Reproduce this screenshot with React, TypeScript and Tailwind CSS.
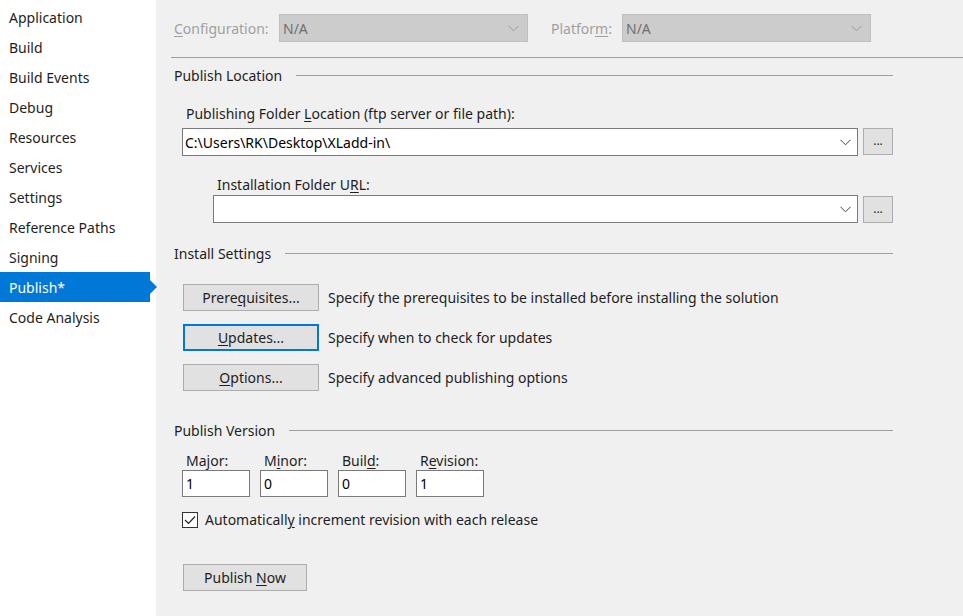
import React from 'react';

const font = { fontFamily: '"Noto Sans", "Open Sans", sans-serif' };

const navItems = [
  'Application',
  'Build',
  'Build Events',
  'Debug',
  'Resources',
  'Services',
  'Settings',
  'Reference Paths',
  'Signing',
  'Publish*',
  'Code Analysis',
];

const U: React.FC<{ children: React.ReactNode }> = ({ children }) => (
  <span className="underline underline-offset-2">{children}</span>
);

const Chevron: React.FC<{ color?: string }> = ({ color = '#444' }) => (
  <svg width="11" height="7" viewBox="0 0 11 7" fill="none">
    <path d="M0.5 0.8 L5.5 5.8 L10.5 0.8" stroke={color} strokeWidth="1" />
  </svg>
);

const SectionHeader: React.FC<{ title: string }> = ({ title }) => (
  <div className="flex items-center h-[20px] w-[719px] gap-[14px]">
    <span className="whitespace-nowrap text-[#1e1e1e]">{title}</span>
    <div className="flex-1 h-px bg-[#a0a0a0]" />
  </div>
);

const WinButton: React.FC<{ children: React.ReactNode; focused?: boolean; className?: string }> = ({
  children,
  focused,
  className,
}) => (
  <button
    className={`h-[27px] bg-[#e1e1e1] text-[#1e1e1e] flex items-center justify-center ${
      focused ? 'border-2 border-[#0078d7]' : 'border border-[#adadad]'
    } ${className ?? ''}`}
  >
    {children}
  </button>
);

const Combo: React.FC<{ value?: string; className?: string }> = ({ value, className }) => (
  <div
    className={`h-[28px] bg-white border border-[#7a7a7a] flex items-center justify-between pl-[2px] pr-[6px] ${className ?? ''}`}
  >
    <span className="text-black">{value}</span>
    <Chevron />
  </div>
);

const VersionField: React.FC<{ label: React.ReactNode; value: string }> = ({ label, value }) => (
  <div className="flex flex-col w-[68px]">
    <span className="pl-[4px] h-[18px] leading-[18px] text-[#1e1e1e]">{label}</span>
    <div className="mt-0 h-[27px] bg-white border border-[#7a7a7a] flex items-center pl-[3px] text-black">
      {value}
    </div>
  </div>
);

export default function App() {
  return (
    <div className="w-[963px] h-[616px] flex bg-[#f0f0f0] text-[14px] overflow-hidden" style={font}>
      {/* left nav */}
      <div className="w-[156px] bg-white pt-[2px] flex flex-col">
        {navItems.map((item) => {
          const active = item === 'Publish*';
          return (
            <div key={item} className="relative h-[30px] flex items-center pl-[9px]">
              {active && (
                <>
                  <div className="absolute left-0 top-0 w-[150px] h-[30px] bg-[#0078d7]" />
                  <div className="absolute left-[150px] top-[8px] w-0 h-0 border-y-[7px] border-y-transparent border-l-[7px] border-l-[#0078d7]" />
                </>
              )}
              <span className={`relative ${active ? 'text-white' : 'text-[#1e1e1e]'}`}>{item}</span>
            </div>
          );
        })}
      </div>

      {/* main */}
      <div className="flex-1 flex flex-col">
        <div className="flex items-center h-[28px] mt-[14px] pl-[18px]">
          <span className="text-[#a0a0a0] w-[105px]">
            <U>C</U>onfiguration:
          </span>
          <div className="w-[249px] h-[28px] bg-[#cccccc] border border-[#bfbfbf] flex items-center justify-between pl-[3px] pr-[8px] text-[#707070]">
            <span>N/A</span>
            <Chevron color="#9a9a9a" />
          </div>
          <span className="text-[#a0a0a0] ml-[23px] w-[71px]">
            Platfor<U>m</U>:
          </span>
          <div className="w-[249px] h-[28px] bg-[#cccccc] border border-[#bfbfbf] flex items-center justify-between pl-[3px] pr-[8px] text-[#707070]">
            <span>N/A</span>
            <Chevron color="#9a9a9a" />
          </div>
        </div>

        <div className="mt-[15px] ml-[15px] h-px bg-[#a0a0a0]" />

        <div className="pl-[18px] mt-[7px]">
          <SectionHeader title="Publish Location" />

          <div className="pl-[12px] mt-[19px] text-[#1e1e1e] h-[20px] leading-[20px]">
            Publishing Folder <U>L</U>ocation (ftp server or file path):
          </div>
          <div className="flex items-center gap-[5px] mt-[4px] pl-[8px]">
            <Combo value="C:\Users\RK\Desktop\XLadd-in\" className="w-[676px]" />
            <WinButton className="w-[30px] -mt-[2px] text-[12px]">...</WinButton>
          </div>

          <div className="pl-[43px] mt-[19px] text-[#1e1e1e] h-[20px] leading-[20px]">
            Installation Folder U<U>R</U>L:
          </div>
          <div className="flex items-center gap-[5px] mt-0 pl-[39px]">
            <Combo className="w-[645px]" />
            <WinButton className="w-[30px] text-[12px]">...</WinButton>
          </div>

          <div className="mt-[20px]">
            <SectionHeader title="Install Settings" />
          </div>

          <div className="flex flex-col gap-[13px] mt-[21px] pl-[9px]">
            <div className="flex items-center gap-[9px]">
              <WinButton className="w-[136px]">
                <span>
                  Prere<U>q</U>uisites...
                </span>
              </WinButton>
              <span className="text-[#1e1e1e]">
                Specify the prerequisites to be installed before installing the solution
              </span>
            </div>
            <div className="flex items-center gap-[9px]">
              <WinButton focused className="w-[136px]">
                <span>
                  <U>U</U>pdates...
                </span>
              </WinButton>
              <span className="text-[#1e1e1e]">Specify when to check for updates</span>
            </div>
            <div className="flex items-center gap-[9px]">
              <WinButton className="w-[136px]">
                <span>
                  <U>O</U>ptions...
                </span>
              </WinButton>
              <span className="text-[#1e1e1e]">Specify advanced publishing options</span>
            </div>
          </div>

          <div className="mt-[29px]">
            <SectionHeader title="Publish Version" />
          </div>

          <div className="flex gap-[10px] mt-[12px] pl-[8px]">
            <VersionField label={<>Ma<U>j</U>or:</>} value="1" />
            <VersionField label={<>M<U>i</U>nor:</>} value="0" />
            <VersionField label={<>Buil<U>d</U>:</>} value="0" />
            <VersionField label={<>R<U>e</U>vision:</>} value="1" />
          </div>

          <div className="flex items-center gap-[7px] mt-[12px] pl-[8px]">
            <div className="w-[16px] h-[16px] bg-white border border-[#333] flex items-center justify-center">
              <svg width="12" height="10" viewBox="0 0 12 10" fill="none">
                <path d="M1 5 L4.5 8.5 L11 1.5" stroke="#222" strokeWidth="1.2" />
              </svg>
            </div>
            <span className="text-[#1e1e1e]">
              Automaticall<U>y</U> increment revision with each release
            </span>
          </div>

          <div className="mt-[34px] pl-[9px]">
            <WinButton className="w-[124px]">
              <span>
                Publish <U>N</U>ow
              </span>
            </WinButton>
          </div>
        </div>
      </div>
    </div>
  );
}
